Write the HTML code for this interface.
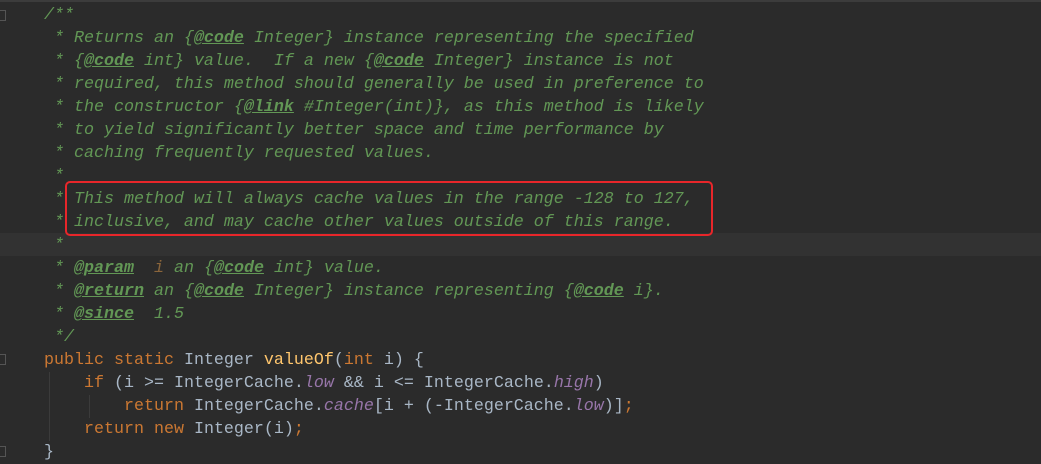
<!DOCTYPE html>
<html><head><meta charset="utf-8"><style>
html,body{margin:0;padding:0}
body{width:1041px;height:464px;background:#2b2b2b;position:relative;overflow:hidden}
.top{position:absolute;left:0;top:0;width:1041px;height:2px;background:#3c3c3c}
.hl{position:absolute;left:0;top:233px;width:1041px;height:23px;background:#323232}
pre{position:absolute;left:44px;top:4px;margin:0;font-family:"Liberation Mono",monospace;font-size:16.67px;line-height:23px;color:#a9b7c6}
.c{color:#629755;font-style:italic}
.t{color:#629755;font-style:italic;font-weight:bold;text-decoration:underline}
.k{color:#cc7832}
.f{color:#ffc66d}
.p{color:#9876aa;font-style:italic}
.pi{color:#8a653b}
.box{position:absolute;left:65px;top:181px;width:644px;height:51px;border:2.5px solid #e8262a;border-radius:5px}
.g{position:absolute;width:1px;background:#3b3b3b}
.fm{position:absolute;left:0;width:5px;height:9px;border:1px solid #555;border-left:none}
</style></head><body>
<div class="top"></div>
<div class="hl"></div>
<div class="g" style="left:49px;top:372px;height:69px"></div>
<div class="g" style="left:89px;top:395px;height:23px"></div>
<div class="fm" style="top:10px"></div>
<div class="fm" style="top:354px"></div>
<div class="fm" style="top:446px"></div>
<pre><span class="c">/**
 * Returns an {<span class="t">@code</span> Integer} instance representing the specified
 * {<span class="t">@code</span> int} value.  If a new {<span class="t">@code</span> Integer} instance is not
 * required, this method should generally be used in preference to
 * the constructor {<span class="t">@link</span> #Integer(int)}, as this method is likely
 * to yield significantly better space and time performance by
 * caching frequently requested values.
 *
 * This method will always cache values in the range -128 to 127,
 * inclusive, and may cache other values outside of this range.
 *
 * <span class="t">@param</span>  <span class="pi">i</span> an {<span class="t">@code</span> int} value.
 * <span class="t">@return</span> an {<span class="t">@code</span> Integer} instance representing {<span class="t">@code</span> i}.
 * <span class="t">@since</span>  1.5
 */</span>
<span class="k">public static</span> Integer <span class="f">valueOf</span>(<span class="k">int</span> i) {
    <span class="k">if</span> (i >= IntegerCache.<span class="p">low</span> &amp;&amp; i &lt;= IntegerCache.<span class="p">high</span>)
        <span class="k">return</span> IntegerCache.<span class="p">cache</span>[i + (-IntegerCache.<span class="p">low</span>)]<span class="k">;</span>
    <span class="k">return new</span> Integer(i)<span class="k">;</span>
}</pre>
<div class="box"></div>
</body></html>
